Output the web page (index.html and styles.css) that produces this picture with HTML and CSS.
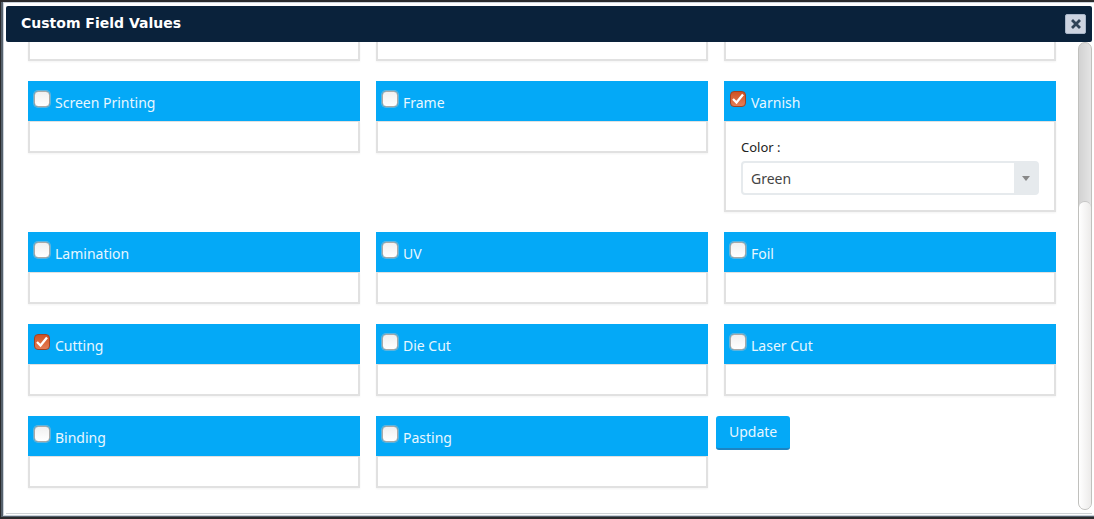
FILE: index.html
```html
<!DOCTYPE html>
<html lang="en">
<head>
<meta charset="utf-8">
<title>Custom Field Values</title>
<link rel="stylesheet" href="styles.css">
</head>
<body>
<div class="frame">
<section class="dialog" role="dialog" aria-labelledby="dialog-title">
  <header class="titlebar">
    <h1 class="title" id="dialog-title">Custom Field Values</h1>
    <button class="close" type="button" aria-label="Close">
      <svg width="12" height="12" viewBox="0 0 12 12"><path d="M3 3L9 9M9 3L3 9" stroke="#2f4256" stroke-width="2.8" stroke-linecap="square"/></svg>
    </button>
  </header>
  <div class="content">
    <form class="fields">
      <div class="cell"><div class="card"><div class="card-body clipped"></div></div></div>
      <div class="cell"><div class="card"><div class="card-body clipped"></div></div></div>
      <div class="cell"><div class="card"><div class="card-body clipped"></div></div></div>

      <div class="cell"><div class="card"><label class="card-head"><input class="check" type="checkbox"><span>Screen Printing</span></label><div class="card-body"></div></div></div>
      <div class="cell"><div class="card"><label class="card-head"><input class="check" type="checkbox"><span>Frame</span></label><div class="card-body"></div></div></div>
      <div class="cell"><div class="card">
        <label class="card-head"><input class="check" type="checkbox" checked><span>Varnish</span></label>
        <div class="card-body options">
          <label class="option-label" for="color">Color :</label>
          <div class="select-wrap">
            <select class="select" id="color"><option>Green</option></select>
            <span class="arrow"><svg width="8" height="5" viewBox="0 0 8 5"><path d="M0 0H8L4 5Z" fill="#888"/></svg></span>
          </div>
        </div>
      </div></div>

      <div class="cell"><div class="card"><label class="card-head"><input class="check" type="checkbox"><span>Lamination</span></label><div class="card-body"></div></div></div>
      <div class="cell"><div class="card"><label class="card-head"><input class="check" type="checkbox"><span>UV</span></label><div class="card-body"></div></div></div>
      <div class="cell"><div class="card"><label class="card-head"><input class="check" type="checkbox"><span>Foil</span></label><div class="card-body"></div></div></div>

      <div class="cell"><div class="card"><label class="card-head"><input class="check" type="checkbox" checked><span>Cutting</span></label><div class="card-body"></div></div></div>
      <div class="cell"><div class="card"><label class="card-head"><input class="check" type="checkbox"><span>Die Cut</span></label><div class="card-body"></div></div></div>
      <div class="cell"><div class="card"><label class="card-head"><input class="check" type="checkbox"><span>Laser Cut</span></label><div class="card-body"></div></div></div>

      <div class="cell"><div class="card"><label class="card-head"><input class="check" type="checkbox"><span>Binding</span></label><div class="card-body"></div></div></div>
      <div class="cell"><div class="card"><label class="card-head"><input class="check" type="checkbox"><span>Pasting</span></label><div class="card-body"></div></div></div>
      <div class="action"><button class="update" type="button">Update</button></div>
    </form>
    <div class="scrollbar"><div class="thumb"></div></div>
  </div>
</section>
</div>
</body>
</html>
```
FILE: styles.css
```css
* { box-sizing: border-box; }

body {
  margin: 0;
  height: 100vh;
  padding: 2px 0 2px 1px;
  background: #2b2b2d;
  font-family: "Noto Sans", "Open Sans", sans-serif;
  font-size: 14px;
  color: #333;
}

.frame {
  height: 100%;
  padding: 0 0 1px 2px;
  background: #56616c;
}

.dialog {
  display: flex;
  flex-direction: column;
  height: 100%;
  padding: 3px 2px 1px;
  border: 1px solid #cbd2da;
  border-right: 0;
  background: #fff;
}

.titlebar {
  display: flex;
  flex: none;
  align-items: center;
  justify-content: space-between;
  height: 36px;
  padding: 0 6px 0 15px;
  border-radius: 2px;
  background: #0a223b;
}

.title {
  margin: 0;
  padding-bottom: 2px;
  font: bold 14px/18px "DejaVu Sans", sans-serif;
  color: #fff;
}

.close {
  display: grid;
  place-items: center;
  width: 21px;
  height: 20px;
  padding: 0;
  border: 1px solid #a7b5c8;
  border-radius: 2px;
  background: #ccd3e0;
}

.content {
  display: flex;
  flex: 1;
  min-height: 0;
  overflow: hidden;
  padding-bottom: 3px;
  border-bottom: 1px solid #cfd3d6;
}

.fields {
  display: grid;
  flex: 1;
  grid-template-columns: repeat(3, 1fr);
  grid-auto-rows: max-content;
  align-items: start;
  row-gap: 20px;
  padding: 0 14px;
}

.cell { padding: 0 8px; }

.card-head {
  display: flex;
  height: 40px;
  padding: 10px 6px 0;
  gap: 5px;
  background: #04a9f7;
  color: #e8f7ff;
  line-height: 24px;
}

.check {
  appearance: none;
  flex: none;
  width: 16px;
  height: 16px;
  margin: 0;
  border: 1px solid #a9a9a7;
  border-radius: 4px;
  background: linear-gradient(#f0f0f0, #fff);
  box-shadow: 0 0 0 1px #9dbccb99;
}

.check:checked {
  border: 1px solid #9f4325;
  background: url("data:image/svg+xml,%3Csvg xmlns='http://www.w3.org/2000/svg' viewBox='0 0 16 16'%3E%3Cpath d='M3 8L6.5 11.5L13 3.5' fill='none' stroke='white' stroke-width='2.3'/%3E%3C/svg%3E") center / 16px no-repeat, linear-gradient(#cf5324, #e57d56);
  box-shadow: none;
}

.card-body {
  height: 32px;
  border: 2px solid #e1e1e1;
  border-top-width: 1px;
  box-shadow: 0 1px 2px #0000000d;
}

.clipped {
  height: 19px;
  border-top: 0;
}

.options {
  height: auto;
  padding: 15px 15px 15px;
}

.option-label {
  display: block;
  margin-bottom: 4px;
  font-size: 13px;
  line-height: 20px;
  color: #222;
}

.select-wrap {
  display: flex;
  height: 34px;
  border: 2px solid #e6eaed;
  border-radius: 4px;
  background: #fff;
}

.select {
  appearance: none;
  flex: 1;
  padding: 0 8px;
  border: 0;
  background: none;
  font: inherit;
  color: #444;
}

.arrow {
  display: grid;
  place-items: center;
  width: 23px;
  background: #e6eaed;
}

.update {
  height: 34px;
  padding: 0 13px 2px;
  border: 0;
  border-bottom: 2px solid #1c84c2;
  border-radius: 3px;
  background: #04a9f7;
  font: inherit;
  color: #e8f7ff;
}

.scrollbar {
  display: flex;
  align-items: flex-end;
  width: 14px;
  border: 1px solid #c0c0bd;
  border-radius: 7px;
  background: linear-gradient(90deg, #d2d2d2, #e4e4e4);
}

.thumb {
  width: 100%;
  height: 66%;
  border-top: 1px solid #c4c4c4;
  border-radius: 6px;
  background: linear-gradient(90deg, #fff, #ecebea);
}
```
